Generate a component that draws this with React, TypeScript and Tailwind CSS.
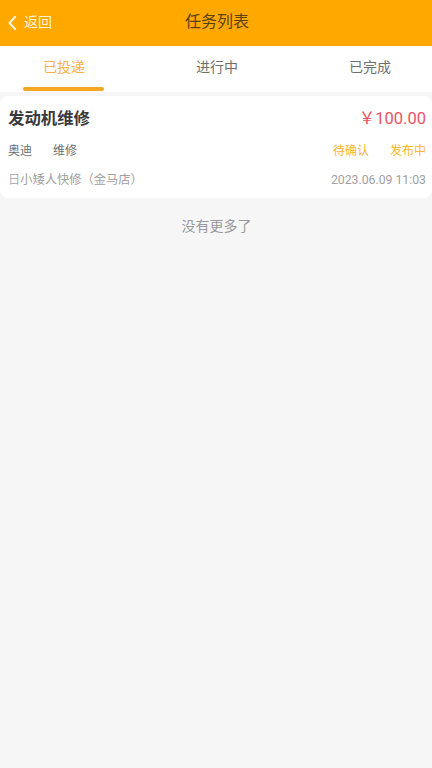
const tabs = ["已投递", "进行中", "已完成"];

const App = () => {
  return (
    <div className="min-h-[768px] bg-[#f6f6f6] font-['Roboto','Noto_Sans_CJK_SC',sans-serif]">
      {/* HEADER */}
      <div className="relative flex h-[46px] items-center justify-center bg-[#ffa800]">
        <div className="absolute left-[8px] top-0 flex h-[44px] items-center gap-[8px] text-[#fff3dc]">
          <svg width="8" height="14" viewBox="0 0 8 14" fill="none" className="mt-[1px]">
            <path d="M7 1 L1.5 7 L7 13" stroke="currentColor" strokeWidth="2" strokeLinecap="round" strokeLinejoin="round" />
          </svg>
          <span className="text-[14px]">返回</span>
        </div>
        <span className="pb-[2px] pl-[2px] text-[16px] text-[#5a4216]">任务列表</span>
      </div>

      {/* TABS */}
      <div className="grid h-[46px] grid-cols-[128px_178px_126px] bg-white">
        {tabs.map((tab, i) => (
          <div
            key={tab}
            className={`relative flex items-center justify-center text-[14px] ${
              i === 0 ? "text-[#fbb040]" : i === 1 ? "text-[#707070]" : "pl-[2px] text-[#707070]"
            }`}
          >
            <span className="pb-[3px]">{tab}</span>
            {i === 0 && (
              <div className="absolute bottom-[1px] left-[23px] h-[4px] w-[81px] rounded-full bg-[#f5a623]" />
            )}
          </div>
        ))}
      </div>

      {/* CARD */}
      <div className="mt-[4px] flex h-[102px] flex-col rounded-[8px] bg-white pl-[8px] pr-[6px]">
        <div className="mt-[10px] flex h-[26px] items-center justify-between">
          <span className="text-[16.4px] font-bold text-[#3a3a3a]">发动机维修</span>
          <span className="text-[16.5px] text-[#ea5562]">￥100.00</span>
        </div>
        <div className="mt-[10px] flex h-[18px] items-center justify-between text-[12px]">
          <div className="flex gap-[21px] text-[#707070]">
            <span>奥迪</span>
            <span>维修</span>
          </div>
          <div className="flex gap-[21px] text-[#fdb52c]">
            <span>待确认</span>
            <span>发布中</span>
          </div>
        </div>
        <div className="mt-[11px] flex h-[18px] items-center justify-between text-[12.25px] text-[#a0a0a0]">
          <span>
            <span className="text-[#b0b0b0]">日</span>小矮人快修（金马店）
          </span>
          <span>2023.06.09 11:03</span>
        </div>
      </div>

      {/* FOOTER */}
      <div className="mt-[18px] pl-[1px] text-center text-[14px] text-[#999999]">没有更多了</div>
    </div>
  );
};

export default App;
